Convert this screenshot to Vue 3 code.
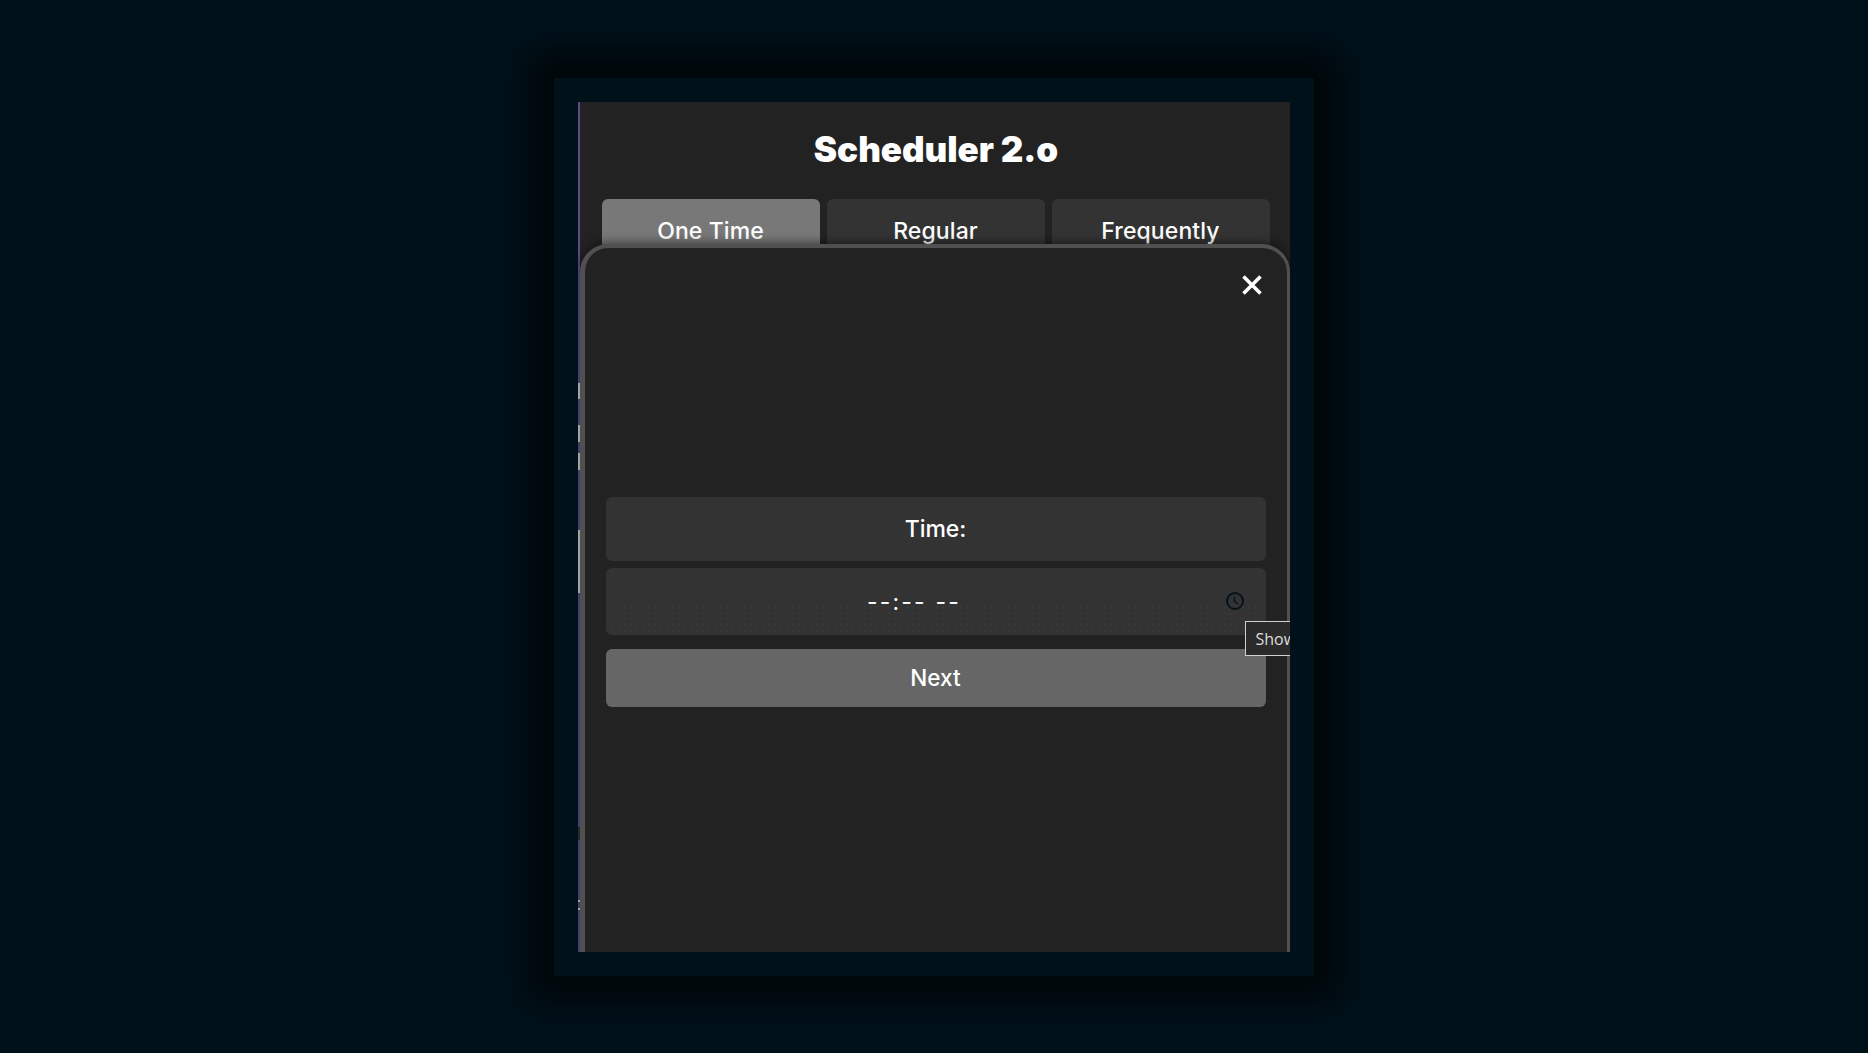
<script setup>
const tabs = [
  { label: 'One Time', active: true },
  { label: 'Regular', active: false },
  { label: 'Frequently', active: false },
]
const leftMarks = [
  { top: 281, height: 16, color: '#c8c8c8' },
  { top: 323, height: 17, color: '#c8c8c8' },
  { top: 351, height: 17, color: '#c8c8c8' },
  { top: 428, height: 63, color: '#c8c8c8' },
  { top: 725, height: 13, color: '#333333' },
  { top: 798, height: 2, color: '#c8c8c8' },
  { top: 806, height: 2, color: '#c8c8c8' },
]
</script>

<template>
  <main class="page">
    <section class="frame">
      <div class="panel">
        <h1 class="title">Scheduler 2.o</h1>
        <nav class="tabs">
          <button v-for="tab in tabs" :key="tab.label" class="tab" :class="{ active: tab.active }">
            {{ tab.label }}
          </button>
        </nav>

        <span class="edge"></span>
        <span
          v-for="mark in leftMarks"
          :key="mark.top"
          class="mark"
          :style="{ top: mark.top + 'px', height: mark.height + 'px', background: mark.color }"
        ></span>

        <div class="modal">
          <button class="close" aria-label="Close">
            <svg width="20" height="20" viewBox="0 0 20 20">
              <path d="M1.5 1.5 L18.5 18.5 M18.5 1.5 L1.5 18.5" stroke="#fff" stroke-width="3.6" fill="none" />
            </svg>
          </button>
          <div class="form">
            <div class="label">Time:</div>
            <div class="input">
              <span class="value">--:-- --</span>
              <svg class="clock" width="20" height="20" viewBox="0 0 20 20">
                <circle cx="10" cy="10" r="8" stroke="#06121a" stroke-width="2" fill="none" />
                <path d="M9.5 5.5 V10.5 L13 13" stroke="#06121a" stroke-width="1.4" fill="none" />
              </svg>
            </div>
            <button class="next">Next</button>
          </div>
          <div class="tooltip">Show</div>
        </div>
      </div>
    </section>
  </main>
</template>

<style>
html, body { margin: 0; background: #00111a; }
</style>

<style scoped>
.page {
  width: 100%;
  height: 1053px;
  overflow: hidden;
  background: #00111a;
  display: flex;
  justify-content: center;
  padding-top: 78px;
  box-sizing: border-box;
  font-family: Inter, "Liberation Sans", sans-serif;
}
.frame {
  width: 760px;
  height: 898px;
  margin-left: -1px;
  box-sizing: border-box;
  padding: 24px;
  background: #00111a;
  box-shadow: 0 0 30px 27px rgba(0, 0, 0, 0.6);
  flex: none;
}
.panel {
  position: relative;
  height: 100%;
  overflow: hidden;
  background: #222;
  padding-left: 2px;
  box-sizing: border-box;
}
.edge {
  position: absolute;
  left: 0;
  top: 0;
  bottom: 0;
  width: 2px;
  background: #5c4a8a;
}
.title {
  margin: 0;
  padding: 26px 0 0 3px;
  height: 75px;
  box-sizing: border-box;
  text-align: center;
  color: #fff;
  font-size: 35px;
  line-height: 42px;
  font-weight: 900;
  letter-spacing: -0.05px;
}
.tabs {
  display: flex;
  gap: 7px;
  padding: 22px 20px 0 22px;
}
.tab {
  flex: 1;
  height: 56px;
  border: 0;
  border-radius: 6px;
  background: #333;
  color: #fff;
  font: 500 23px/52px Inter, "Liberation Sans", sans-serif;
  letter-spacing: 0.1px;
  padding: 6px 0 0;
}
.tab.active { background: #787878; }
.mark {
  position: absolute;
  left: 0;
  width: 2px;
}
.modal {
  position: absolute;
  left: 2px;
  top: 142px;
  right: 0;
  height: 716px;
  box-sizing: border-box;
  background: #222;
  border-style: solid;
  border-color: #505050;
  border-width: 4px 3px 0 5px;
  border-radius: 28px 28px 0 0;
  box-shadow: 0 -2px 10px rgba(0, 0, 0, 0.45);
  display: flex;
  flex-direction: column;
  justify-content: center;
  padding: 0 21px 4px;
}
.close {
  position: absolute;
  top: 27px;
  right: 25px;
  width: 20px;
  height: 20px;
  padding: 0;
  border: 0;
  background: none;
  display: flex;
}
.form {
  display: flex;
  flex-direction: column;
}
.label {
  height: 64px;
  border-radius: 6px;
  background: #333;
  color: #fff;
  font-size: 23px;
  font-weight: 500;
  line-height: 65px;
  text-align: center;
}
.input {
  position: relative;
  height: 67px;
  margin-top: 7px;
  padding-right: 43px;
  box-sizing: border-box;
  border-radius: 6px;
  background: #333;
  display: flex;
  align-items: center;
  justify-content: center;
  color: #fff;
  font-size: 23px;
  letter-spacing: 2.2px;
}
.input::after {
  content: "";
  position: absolute;
  left: 4px;
  right: 4px;
  top: 36px;
  bottom: 0;
  background-image: radial-gradient(circle, rgba(255, 255, 255, 0.05) 0.6px, transparent 0.8px);
  background-size: 6px 6px;
}
.clock {
  position: absolute;
  right: 21px;
  top: 23px;
}
.next {
  height: 58px;
  margin-top: 14px;
  border: 0;
  border-radius: 6px;
  background: #666;
  color: #fff;
  font: 500 22.5px/58px Inter, "Liberation Sans", sans-serif;
  padding: 0;
}
.tooltip {
  position: absolute;
  left: 660px;
  top: 373px;
  width: 120px;
  height: 35px;
  box-sizing: border-box;
  border: 1px solid #d0d0d0;
  background: #2b2b2b;
  color: #ddd;
  font: 16px/34px "Open Sans", sans-serif;
  padding-left: 10px;
}
</style>
